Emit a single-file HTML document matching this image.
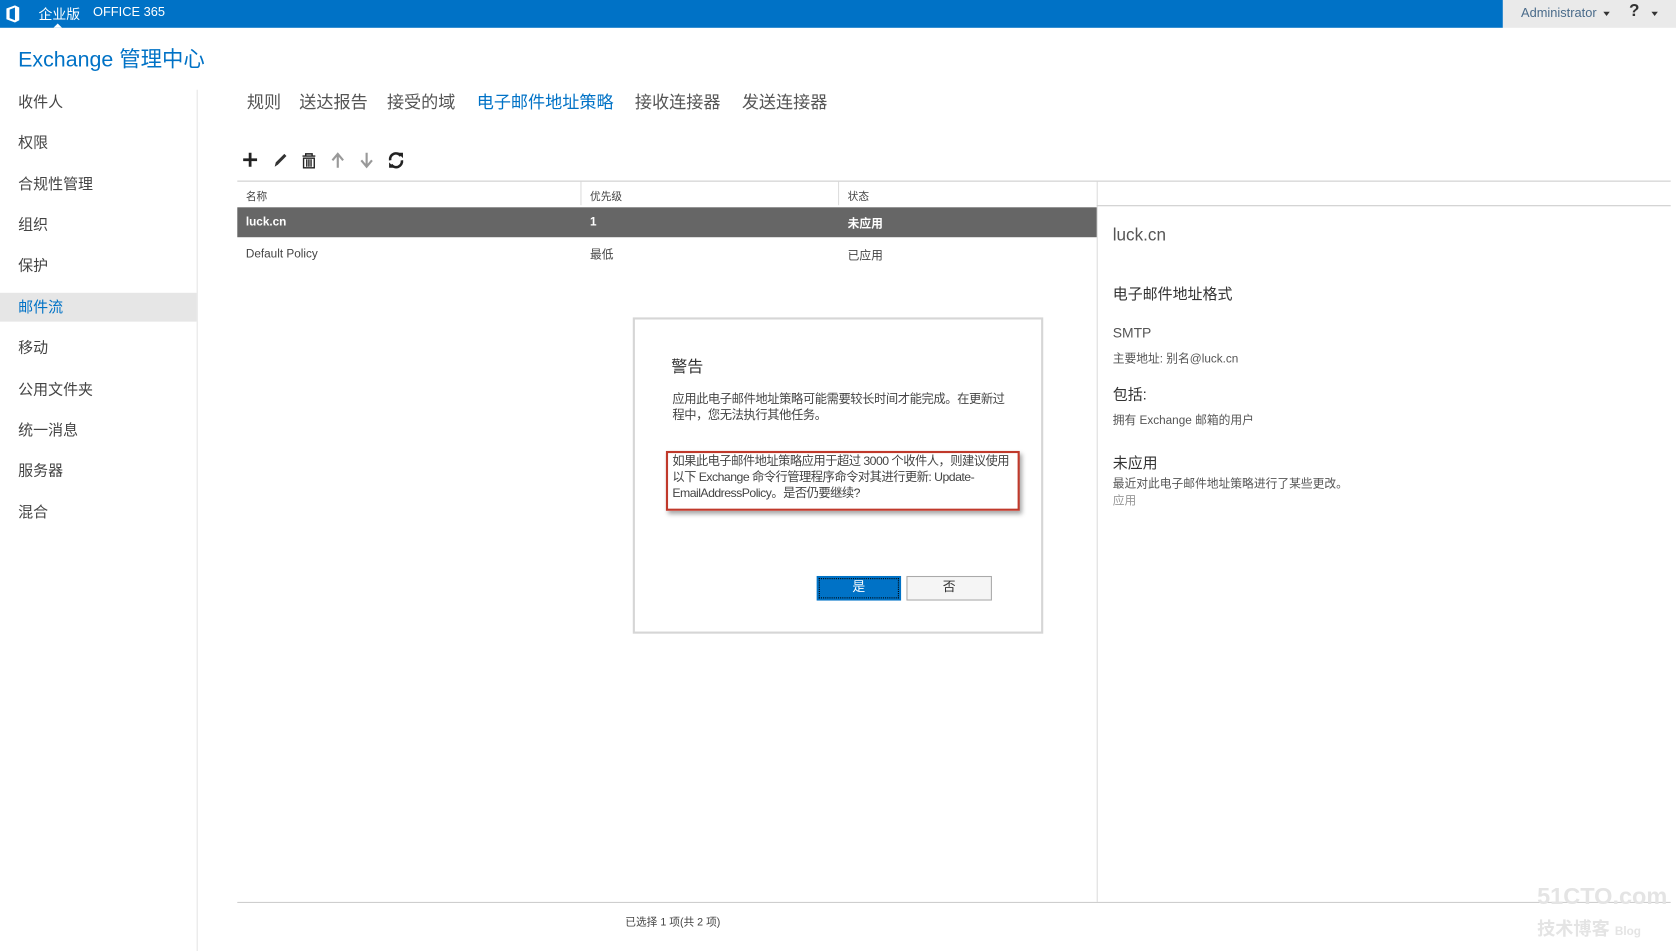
<!DOCTYPE html>
<html><head><meta charset="utf-8"><style>
html,body{margin:0;padding:0;width:1676px;height:951px;overflow:hidden;background:#fff}
#w{position:absolute;left:0;top:0;width:1568px;height:890px;transform:scale(1.0689,1.0686);transform-origin:0 0;font-family:"Segoe UI","Liberation Sans","Noto Sans CJK SC",sans-serif;color:#333}
.a{position:absolute;white-space:nowrap}
.nav{font-size:14px;color:#444}
.tab{font-size:16px;color:#555;top:82px}
</style></head><body><div id="w">
<div class="a" style="left:0;top:0;width:1406px;height:26px;background:#0072c6"></div>
<div class="a" style="left:1406px;top:0;width:162px;height:26px;background:#eaeaea"></div>
<svg class="a" style="left:5px;top:5px" width="14" height="16" viewBox="0 0 14 16"><path d="M1 3 L9 0 L13 2 L13 14 L9 16 L1 13 Z M4 4 L4 12 L9 14 L9 2 Z" fill="#fff" fill-rule="evenodd"/></svg>
<div class="a" style="left:36px;top:3px;font-size:13px;color:#fff">企业版</div>
<div class="a" style="left:50px;top:22px;width:0;height:0;border-left:4px solid transparent;border-right:4px solid transparent;border-bottom:4px solid #fff"></div>
<div class="a" style="left:87px;top:4px;font-size:12px;color:#fff">OFFICE 365</div>
<div class="a" style="left:1423px;top:5px;font-size:12px;color:#4a6b8a">Administrator</div>
<div class="a" style="left:1500px;top:11px;border-left:3.5px solid transparent;border-right:3.5px solid transparent;border-top:4px solid #333"></div>
<div class="a" style="left:1524px;top:2px;font-size:16px;font-weight:bold;color:#333">?</div>
<div class="a" style="left:1545px;top:11px;border-left:3.5px solid transparent;border-right:3.5px solid transparent;border-top:4px solid #333"></div>
<div class="a" style="left:17px;top:39px;font-size:20px;color:#0072c6">Exchange 管理中心</div>
<div class="a" style="left:184px;top:84px;width:1px;height:806px;background:#e5e5e5"></div>
<div class="a nav" style="left:17px;top:85px">收件人</div>
<div class="a nav" style="left:17px;top:123px">权限</div>
<div class="a nav" style="left:17px;top:162px">合规性管理</div>
<div class="a nav" style="left:17px;top:200px">组织</div>
<div class="a nav" style="left:17px;top:238px">保护</div>
<div class="a" style="left:0;top:274px;width:184px;height:27px;background:#e6e6e6"></div>
<div class="a nav" style="left:17px;top:277px;color:#0072c6">邮件流</div>
<div class="a nav" style="left:17px;top:315px">移动</div>
<div class="a nav" style="left:17px;top:354px">公用文件夹</div>
<div class="a nav" style="left:17px;top:392px">统一消息</div>
<div class="a nav" style="left:17px;top:430px">服务器</div>
<div class="a nav" style="left:17px;top:469px">混合</div>
<div class="a tab" style="left:231px">规则</div>
<div class="a tab" style="left:280px">送达报告</div>
<div class="a tab" style="left:362px">接受的域</div>
<div class="a tab" style="left:446px;color:#0072c6">电子邮件地址策略</div>
<div class="a tab" style="left:594px">接收连接器</div>
<div class="a tab" style="left:694px">发送连接器</div>
<svg class="a" style="left:226px;top:141px" width="160" height="18" viewBox="0 0 160 18">
<path d="M8 2V15M1.5 8.5H14.5" stroke="#222" stroke-width="2.6"/>
<path d="M31 15L32 11L40 3L42 5L34 13Z" fill="#333"/>
<path d="M57 5H69M60 5V3H66V5M58 7H68V16H58Z M61 8V15M63 8V15M65 8V15" stroke="#222" stroke-width="1.3" fill="none"/>
<path d="M90 16V4M85 9L90 3L95 9" stroke="#999" stroke-width="2" fill="none"/>
<path d="M117 2V14M112 9L117 15L122 9" stroke="#999" stroke-width="2" fill="none"/>
<path d="M139 9A5.5 5.5 0 0 1 149 5M150 9A5.5 5.5 0 0 1 140 13" stroke="#222" stroke-width="2.4" fill="none"/><path d="M146 2L151 2L151 7Z M143 16L138 16L138 11Z" fill="#222"/>
</svg>
<div class="a" style="left:222px;top:169px;width:1341px;height:1px;background:#ccc"></div>
<div class="a" style="left:543px;top:170px;width:1px;height:22px;background:#ddd"></div>
<div class="a" style="left:784px;top:170px;width:1px;height:22px;background:#ddd"></div>
<div class="a" style="left:1026px;top:170px;width:1px;height:674px;background:#ddd"></div>
<div class="a" style="left:1026px;top:192px;width:537px;height:1px;background:#ccc"></div>
<div class="a" style="left:230px;top:175px;font-size:10px;color:#444">名称</div>
<div class="a" style="left:552px;top:175px;font-size:10px;color:#444">优先级</div>
<div class="a" style="left:793px;top:175px;font-size:10px;color:#444">状态</div>
<div class="a" style="left:222px;top:194px;width:804px;height:28px;background:#666"></div>
<div class="a" style="left:230px;top:202px;font-size:11px;color:#fff;font-weight:bold">luck.cn</div>
<div class="a" style="left:552px;top:202px;font-size:11px;color:#fff;font-weight:bold">1</div>
<div class="a" style="left:793px;top:201px;font-size:11px;color:#fff;font-weight:bold">未应用</div>
<div class="a" style="left:230px;top:232px;font-size:11px;color:#444">Default Policy</div>
<div class="a" style="left:552px;top:230px;font-size:11px;color:#444">最低</div>
<div class="a" style="left:793px;top:231px;font-size:11px;color:#444">已应用</div>
<div class="a" style="left:1041px;top:212px;font-size:16px;color:#555">luck.cn</div>
<div class="a" style="left:1041px;top:265px;font-size:14px;color:#333">电子邮件地址格式</div>
<div class="a" style="left:1041px;top:304px;font-size:13px;color:#555">SMTP</div>
<div class="a" style="left:1041px;top:327px;font-size:11px;color:#555">主要地址: 别名@luck.cn</div>
<div class="a" style="left:1041px;top:359px;font-size:14px;color:#333">包括:</div>
<div class="a" style="left:1041px;top:385px;font-size:11px;color:#555">拥有 Exchange 邮箱的用户</div>
<div class="a" style="left:1041px;top:423px;font-size:14px;color:#333">未应用</div>
<div class="a" style="left:1041px;top:444px;font-size:11px;color:#555">最近对此电子邮件地址策略进行了某些更改。</div>
<div class="a" style="left:1041px;top:460px;font-size:11px;color:#999">应用</div>
<div class="a" style="left:222px;top:844px;width:1341px;height:1px;background:#ccc"></div>
<div class="a" style="left:585px;top:854px;font-size:10px;color:#444">已选择 1 项(共 2 项)</div>
<div class="a" style="left:1438px;top:826px;font-size:22px;font-weight:bold;color:#e4e4e4;font-family:'Liberation Sans',sans-serif">51CTO.com</div>
<div class="a" style="left:1438px;top:855px;font-size:17px;font-weight:bold;color:#e4e4e4">技术博客 <span style="font-size:11px">Blog</span></div>
<div class="a" style="left:592px;top:297px;width:380px;height:292px;border:2px solid #d6d6d6;background:#fff"></div>
<div class="a" style="left:628px;top:332px;font-size:15px;color:#333">警告</div>
<div class="a" style="left:629px;top:367px;font-size:11.5px;line-height:15px;color:#444;white-space:normal;width:312px;letter-spacing:-0.4px">应用此电子邮件地址策略可能需要较长时间才能完成。在更新过程中，您无法执行其他任务。</div>
<div class="a" style="left:623px;top:422px;width:327px;height:52px;border:2px solid #c0392b;box-shadow:2px 3px 4px rgba(0,0,0,.35)"></div>
<div class="a" style="left:629px;top:425px;font-size:11.5px;line-height:15px;color:#444;white-space:normal;width:318px;letter-spacing:-0.5px">如果此电子邮件地址策略应用于超过 3000 个收件人，则建议使用以下 Exchange 命令行管理程序命令对其进行更新: Update-EmailAddressPolicy。是否仍要继续?</div>
<div class="a" style="left:764px;top:539px;width:79px;height:23px;background:#0072c6;outline:1px dotted #000;outline-offset:-3px;color:#fff;font-size:12px;text-align:center;line-height:20px">是</div>
<div class="a" style="left:848px;top:539px;width:78px;height:21px;background:#f5f5f5;border:1px solid #aaa;color:#333;font-size:12px;text-align:center;line-height:19px">否</div>
</div></body></html>
